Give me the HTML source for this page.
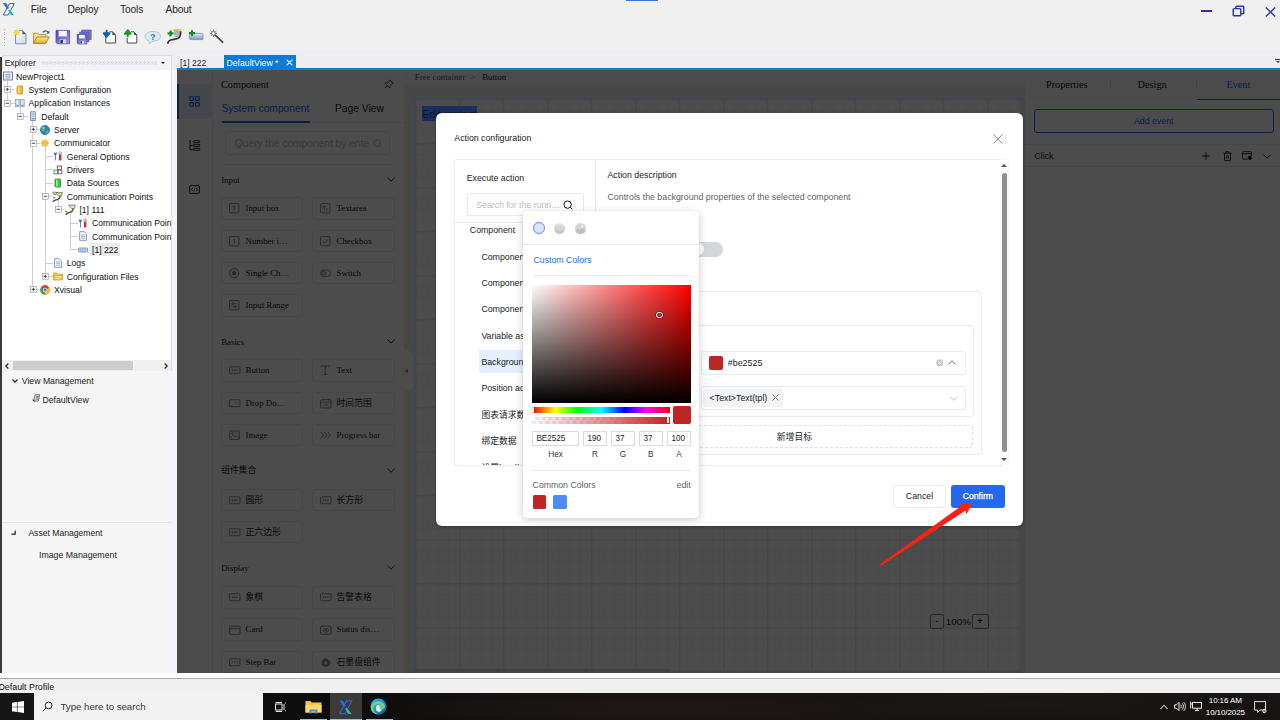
<!DOCTYPE html>
<html lang="en">
<head>
<meta charset="utf-8">
<title>Action configuration</title>
<style>
*{box-sizing:border-box;margin:0;padding:0}
html,body{width:1280px;height:720px;overflow:hidden;background:#f0f0f0}
body{font-family:"Liberation Sans","Noto Sans CJK SC",sans-serif;font-size:8.6px;color:#000;line-height:1}
#app{position:relative;width:1280px;height:720px;overflow:hidden;background:#f0f0f0}
.abs{position:absolute}
.t{position:absolute;white-space:nowrap;line-height:1;transform:translateY(.8px)}
#menubar .t,#taskbar .t{transform:none}
svg{position:absolute;overflow:visible}
/* ---------- top chrome ---------- */
#menubar .t{font-size:10.200px;color:#262626;top:5.100px;letter-spacing:-.12px}
#tabs{position:absolute;left:0;top:52px;width:1280px;height:17px;background:#eeeef2;z-index:5}
/* ---------- explorer ---------- */
#explorer{position:absolute;left:2px;top:69.5px;width:170px;height:290.800px;background:#fff;overflow:hidden}
.row{position:absolute;transform:translateY(.7px);left:0;height:13.33px;white-space:nowrap;font-size:8.65px;line-height:13.33px;color:#111}
/* ---------- web view ---------- */
#web{position:absolute;left:177px;top:69px;width:1103px;height:604px;background:#fff;overflow:hidden}
#mask{position:absolute;left:0;top:0;width:1103px;height:604px;background:rgba(0,0,0,.7)}
.serif{font-family:"Liberation Serif","Noto Serif CJK SC",serif}
</style>
</head>
<body>
<div id="app">

<!-- MENUBAR -->
<div id="menubar" class="abs" style="left:0;top:0;width:1280px;height:21px;background:#f0f0f0">
  <svg style="left:0;top:0" width="18" height="18" viewBox="0 0 18 18">
    <path d="M9.500 3.500H14.300L8.300 15H3.300Z" fill="none" stroke="#2c4cb4" stroke-width=".9"/>
    <path d="M2.800 3.100H6.200L8.900 8.100 7.300 9.300Z" fill="#2f62f5"/>
    <path d="M8.200 10.300 9.600 9.600 14.100 15.300H10.800Z" fill="#19c9a4"/>
  </svg>
  <span class="t" style="left:30.700px">File</span>
  <span class="t" style="left:67.5px">Deploy</span>
  <span class="t" style="left:120px">Tools</span>
  <span class="t" style="left:165.5px">About</span>
  <div class="abs" style="left:626px;top:0;width:32px;height:1px;background:#3a78d8"></div>
  <div class="abs" style="left:1201px;top:10.300px;width:11.200px;height:2.100px;background:#2a33a8"></div>
  <svg style="left:1232px;top:5px" width="13" height="12" viewBox="0 0 13 12" fill="none" stroke="#2a33a8" stroke-width="1.4">
    <rect x="1.2" y="3.6" width="7.6" height="7.2" rx="1"/><path d="M3.8 3.4V2.2a1 1 0 0 1 1-1h6a1 1 0 0 1 1 1v5.6a1 1 0 0 1-1 1H9.2"/>
  </svg>
  <svg style="left:1265px;top:6.5px" width="11" height="10" viewBox="0 0 11 10" stroke="#2a33a8" stroke-width="1.4"><path d="M.8.6 10.2 9.4M10.2.6.8 9.4"/></svg>
</div>

<!-- TOOLBAR -->
<div id="toolbar" class="abs" style="left:0;top:21px;width:1280px;height:30px;background:#f0f0f0">
  <div class="abs" style="left:4px;top:8px;width:1px;height:17px;background:repeating-linear-gradient(#b5b5b5 0 1px,transparent 1px 2.600px)"></div>
  <svg style="left:0;top:0" width="240" height="30" viewBox="0 21 240 30">
    <defs>
      <linearGradient id="gdoc" x1="0" y1="0" x2="1" y2="1"><stop offset="0" stop-color="#ffffff"/><stop offset="1" stop-color="#c6d6ee"/></linearGradient>
      <linearGradient id="gfold" x1="0" y1="0" x2="0" y2="1"><stop offset="0" stop-color="#fbe9a4"/><stop offset="1" stop-color="#e9a91f"/></linearGradient>
      <linearGradient id="gsave" x1="0" y1="0" x2="1" y2="1"><stop offset="0" stop-color="#4a48b8"/><stop offset="1" stop-color="#9d9ce0"/></linearGradient>
      <linearGradient id="gdev" x1="0" y1="0" x2="0" y2="1"><stop offset="0" stop-color="#e4eaf5"/><stop offset="1" stop-color="#7f95bd"/></linearGradient>
    </defs>
    <!-- new -->
    <path d="M15.600 30.600h6.800l3.600 3.600v9.600H15.600z" fill="url(#gdoc)" stroke="#6d7fa3" stroke-width=".9"/>
    <path d="M22.400 30.600v3.600H26z" fill="#4d5f86"/>
    <path d="M16.600 28.600l.9 2 2-.9-.9 2 2 .9-2 .9.900 2-2-.900-.900 2-.900-2-2 .900.900-2-2-.900 2-.900-.900-2 2 .900z" fill="#f7d84a"/>
    <!-- open -->
    <path d="M33.600 43.400V33.200h4.400l1.200 1.400h6.600v2.600" fill="#f6dc86" stroke="#a87f1c" stroke-width=".8"/>
    <path d="M33.600 43.400 36.800 37h12.400l-3.400 6.400z" fill="url(#gfold)" stroke="#9a6f10" stroke-width=".8"/>
    <path d="M42.600 32.400c1.600-2 4-2.200 5.400-.2" fill="none" stroke="#2f5fa8" stroke-width="1.200"/><path d="M49.400 30.400v3.200h-3z" fill="#2f5fa8"/>
    <!-- save -->
    <path d="M56 30.400h13.600v13.400H57.400L56 42.400z" fill="url(#gsave)" stroke="#3c3a9c" stroke-width=".7"/>
    <rect x="58.600" y="30.800" width="8.200" height="5.600" fill="#f4f5fd"/><rect x="59.600" y="39.400" width="6.400" height="4" fill="#d8d9f2"/><rect x="60.400" y="40" width="2.400" height="3.200" fill="#26262e"/>
    <!-- save all -->
    <path d="M81.600 30h9.600v9.600h-9.600z" fill="#7d7cd0" stroke="#4a48a8" stroke-width=".6"/>
    <path d="M79.400 32.200H89v9.600h-9.600z" fill="#706fc8" stroke="#4a48a8" stroke-width=".6"/>
    <path d="M77.200 34.400h9.600V44h-8.600l-1-1z" fill="url(#gsave)" stroke="#3c3a9c" stroke-width=".6"/>
    <rect x="79" y="34.800" width="5.800" height="3.600" fill="#f4f5fd"/><rect x="79.800" y="40.800" width="4.400" height="3" fill="#d8d9f2"/><rect x="80.400" y="41.200" width="1.600" height="2.400" fill="#26262e"/>
    <!-- import -->
    <path d="M105.800 35v8h9.800v-8.200l-3-3h-3" fill="#fff" stroke="#4a4a4a" stroke-width="1"/><path d="M112.400 31.800v3.200h3.200z" fill="#4a4a4a"/>
    <path d="M106.600 29.800v3.400M103.600 33.200h6l-3 3.600z" fill="#0f5fb0" stroke="#0f5fb0" stroke-width="1.800" stroke-linejoin="round" stroke-linecap="butt"/>
    <!-- export -->
    <path d="M127.200 38v5h9.600v-8.200l-3-3h-3" fill="#fff" stroke="#4a4a4a" stroke-width="1"/><path d="M133.800 31.800v3.200h3.200z" fill="#4a4a4a"/>
    <path d="M127.800 37.200v-3.600M124.800 33.800h6l-3-3.600z" fill="#149a22" stroke="#149a22" stroke-width="1.800" stroke-linejoin="round"/>
    <!-- help -->
    <path d="M152.800 31.400c-4.200 0-7.600 2.200-7.600 5 0 1.800 1.400 3.400 3.600 4.200l.6 3.400 2.600-2.800h.8c4.200 0 7.600-2.200 7.600-5s-3.400-4.800-7.600-4.800z" fill="#dcebf6" stroke="#9dbdd8" stroke-width=".9"/>
    <text x="152.900" y="39.800" font-family="Liberation Sans,sans-serif" font-size="8.500" font-weight="bold" fill="#4060c0" text-anchor="middle">?</text>
    <!-- plug plus -->
    <rect x="173" y="29" width="8.200" height="1.800" fill="#e6d63a"/><path d="M174.600 30.800h5.200v4.400l-1.200 1.600h-2.800l-1.200-1.600z" fill="#b4b4b4" stroke="#8a8a8a" stroke-width=".4"/>
    <path d="M180.600 31.400c.4 4.600-.8 6.600-3.600 7.400-3 .8-6.400.2-8.200 2.400-.8 1-1 1.800-1.200 2.600" fill="none" stroke="#333" stroke-width="1.700"/>
    <path d="M170.600 30.400v6M167.600 33.400h6" stroke="#1a8a24" stroke-width="2.100"/>
    <!-- device plus -->
    <rect x="189.600" y="33.400" width="13.400" height="6.200" rx="1.200" fill="url(#gdev)" stroke="#6a82ac" stroke-width=".7"/>
    <path d="M192 30.200v5.800M189 33.100h6" stroke="#1a8a24" stroke-width="2.100"/>
    <!-- wand -->
    <path d="M215.200 35.200 222.600 42.200" stroke="#444" stroke-width="1.800" stroke-linecap="round"/>
    <circle cx="213.400" cy="33.300" r="1.900" fill="#f4f4f4" stroke="#666" stroke-width=".9"/>
    <path d="M213.400 29.600v1.600M213.400 35.400v1.600M209.700 33.300h1.600M215.500 33.300h1.600M210.800 30.700l1.100 1.100M216 30.700l-1.100 1.100M210.800 35.900l1.100-1.100" stroke="#666" stroke-width=".9"/>
  </svg>
</div>

<!-- TAB STRIP -->
<div class="abs" style="left:0;top:50px;width:1280px;height:3px;background:#eeeef2"></div>
<div id="tabs">
  <div class="abs" style="left:2px;top:3px;width:170px;height:14.500px;border:1px solid #dcdce4;border-bottom:0;background:#f3f3f7"></div>
  <span class="t" style="left:4.700px;top:5.900px;font-size:8.350px;color:#222">Explorer</span>
  <div class="abs" style="left:41px;top:9px;width:116px;height:4px;background-image:radial-gradient(circle,#b9b9c4 .45px,transparent .6px),radial-gradient(circle,#b9b9c4 .45px,transparent .6px);background-size:2.660px 2.660px;background-position:0 0,1.330px 1.330px"></div>
  <div class="abs" style="left:160.500px;top:9.600px;width:0;height:0;border-left:2.800px solid transparent;border-right:2.800px solid transparent;border-top:2.800px solid #111"></div>
  <span class="t" style="left:180px;top:5.500px;font-size:8.600px;color:#222">[1] 222</span>
  <div class="abs" style="left:223.500px;top:3px;width:72px;height:14px;background:#0a7bd7"></div>
  <span class="t" style="left:226.500px;top:5.500px;font-size:8.700px;color:#fff">DefaultView *</span>
  <svg style="left:285.500px;top:7px" width="7" height="7" viewBox="0 0 7 7" stroke="#fff" stroke-width="1.100"><path d="M.6.6 6.400 6.400M6.400.6.6 6.400"/></svg>
  <div class="abs" style="left:176.600px;top:15.900px;width:1104px;height:1.800px;background:#0a7bd7"></div>
  <div class="abs" style="left:1275px;top:6.500px;width:5px;height:1px;background:#333"></div>
  <div class="abs" style="left:1275.500px;top:8.800px;width:0;height:0;border-left:2.500px solid transparent;border-right:2.500px solid transparent;border-top:2.600px solid #333"></div>
</div>

<!-- EXPLORER -->
<div id="explorer">
<!--EXP-START-->
<div class="abs" style="left:4.85px;top:11.84px;width:.7px;height:21.67px;background:#cfcfcf"></div>
<div class="abs" style="left:17.65px;top:37.50px;width:.7px;height:9.33px;background:#cfcfcf"></div>
<div class="abs" style="left:30.45px;top:50.84px;width:.7px;height:169.33px;background:#cfcfcf"></div>
<div class="abs" style="left:43.05px;top:77.50px;width:.7px;height:129.33px;background:#cfcfcf"></div>
<div class="abs" style="left:55.85px;top:130.83px;width:.7px;height:9.33px;background:#cfcfcf"></div>
<div class="abs" style="left:68.45px;top:144.17px;width:.7px;height:36.00px;background:#cfcfcf"></div>
<div class="abs" style="left:5.20px;top:19.82px;width:7.40px;height:.7px;background:#cfcfcf"></div>
<div class="abs" style="left:5.20px;top:33.15px;width:7.40px;height:.7px;background:#cfcfcf"></div>
<div class="abs" style="left:18.00px;top:46.49px;width:7.60px;height:.7px;background:#cfcfcf"></div>
<div class="abs" style="left:30.80px;top:59.82px;width:7.40px;height:.7px;background:#cfcfcf"></div>
<div class="abs" style="left:30.80px;top:73.15px;width:7.40px;height:.7px;background:#cfcfcf"></div>
<div class="abs" style="left:43.40px;top:86.48px;width:7.20px;height:.7px;background:#cfcfcf"></div>
<div class="abs" style="left:43.40px;top:99.82px;width:7.40px;height:.7px;background:#cfcfcf"></div>
<div class="abs" style="left:43.40px;top:113.15px;width:7.60px;height:.7px;background:#cfcfcf"></div>
<div class="abs" style="left:43.40px;top:126.48px;width:6.60px;height:.7px;background:#cfcfcf"></div>
<div class="abs" style="left:56.20px;top:139.82px;width:6.20px;height:.7px;background:#cfcfcf"></div>
<div class="abs" style="left:68.80px;top:153.15px;width:7.20px;height:.7px;background:#cfcfcf"></div>
<div class="abs" style="left:68.80px;top:166.48px;width:7.60px;height:.7px;background:#cfcfcf"></div>
<div class="abs" style="left:68.80px;top:179.82px;width:7.60px;height:.7px;background:#cfcfcf"></div>
<div class="abs" style="left:43.40px;top:193.15px;width:7.60px;height:.7px;background:#cfcfcf"></div>
<div class="abs" style="left:43.40px;top:206.48px;width:7.20px;height:.7px;background:#cfcfcf"></div>
<div class="abs" style="left:30.80px;top:219.81px;width:7.40px;height:.7px;background:#cfcfcf"></div>
<svg style="left:1.0px;top:1.8px" width="10" height="10" viewBox="0 0 10 10"><rect x=".5" y="1" width="9" height="8" fill="#eef3fb" stroke="#5b87c9" stroke-width="1"/><path d="M2.500 3.500h5M2.500 5.200h5M2.500 6.900h5" stroke="#777" stroke-width=".7"/></svg>
<span class="row" style="left:14.0px;top:0.17px">NewProject1</span>
<svg style="left:1.90px;top:16.87px" width="6.600" height="6.600" viewBox="0 0 6.600 6.600"><rect x=".35" y=".35" width="5.900" height="5.900" fill="#fff" stroke="#9a9a9a" stroke-width=".7"/><path d="M1.600 3.300h3.400" stroke="#222" stroke-width=".8"/><path d="M3.300 1.600v3.400" stroke="#222" stroke-width=".8"/></svg>
<svg style="left:12.6px;top:15.2px" width="10" height="10" viewBox="0 0 10 10"><rect x="2" y="1" width="5.600" height="8" rx="1" fill="#f2b92c" stroke="#c48a10" stroke-width=".8"/><rect x="3" y="1.600" width="1.600" height="6.800" fill="#fbe08a"/></svg>
<span class="row" style="left:26.6px;top:13.50px">System Configuration</span>
<svg style="left:1.90px;top:30.20px" width="6.600" height="6.600" viewBox="0 0 6.600 6.600"><rect x=".35" y=".35" width="5.900" height="5.900" fill="#fff" stroke="#9a9a9a" stroke-width=".7"/><path d="M1.600 3.300h3.400" stroke="#222" stroke-width=".8"/></svg>
<svg style="left:12.6px;top:28.5px" width="10" height="10" viewBox="0 0 10 10"><rect x=".6" y="1.400" width="3.600" height="7.400" fill="#dfe6f2" stroke="#8b9cc0" stroke-width=".8"/><rect x="5.600" y="1.400" width="3.600" height="7.400" fill="#dfe6f2" stroke="#8b9cc0" stroke-width=".8"/><rect x="1.400" y="6.800" width="2" height="1.200" fill="#4caf50"/><rect x="6.400" y="6.800" width="2" height="1.200" fill="#4caf50"/></svg>
<span class="row" style="left:26.6px;top:26.84px">Application Instances</span>
<svg style="left:14.70px;top:43.54px" width="6.600" height="6.600" viewBox="0 0 6.600 6.600"><rect x=".35" y=".35" width="5.900" height="5.900" fill="#fff" stroke="#9a9a9a" stroke-width=".7"/><path d="M1.600 3.300h3.400" stroke="#222" stroke-width=".8"/></svg>
<svg style="left:25.6px;top:41.8px" width="10" height="10" viewBox="0 0 10 10"><rect x="2.600" y=".8" width="4.600" height="8.600" fill="#e3ebf8" stroke="#5f7fb8" stroke-width=".9"/><path d="M3.600 3h2.600M3.600 5h2.600" stroke="#5f7fb8" stroke-width=".7"/><rect x="3.600" y="7" width="2.600" height="1.200" fill="#4caf50"/></svg>
<span class="row" style="left:39.3px;top:40.17px">Default</span>
<svg style="left:27.50px;top:56.87px" width="6.600" height="6.600" viewBox="0 0 6.600 6.600"><rect x=".35" y=".35" width="5.900" height="5.900" fill="#fff" stroke="#9a9a9a" stroke-width=".7"/><path d="M1.600 3.300h3.400" stroke="#222" stroke-width=".8"/><path d="M3.300 1.600v3.400" stroke="#222" stroke-width=".8"/></svg>
<svg style="left:38.2px;top:55.2px" width="10" height="10" viewBox="0 0 10 10"><circle cx="5" cy="5" r="4.600" fill="#2d7fd6" stroke="#1c4f9c" stroke-width=".6"/><path d="M2.200 2.600c1.400-.8 2.800-.4 3 .8s-1.600 1.400-1.400 2.600-1.400.6-2-.6.000-2.400.4-2.800zM6.400 5.600c1-.4 2.200.2 2 1.200s-1.400 2-2.200 1.400.000-2.200.2-2.600z" fill="#58c24a"/><ellipse cx="3.600" cy="2.800" rx="1.600" ry="1" fill="#fff" opacity=".35"/></svg>
<span class="row" style="left:52.0px;top:53.50px">Server</span>
<svg style="left:27.50px;top:70.20px" width="6.600" height="6.600" viewBox="0 0 6.600 6.600"><rect x=".35" y=".35" width="5.900" height="5.900" fill="#fff" stroke="#9a9a9a" stroke-width=".7"/><path d="M1.600 3.300h3.400" stroke="#222" stroke-width=".8"/></svg>
<svg style="left:38.2px;top:68.5px" width="10" height="10" viewBox="0 0 10 10"><path d="M5 0 6 3.200 9 1.400 7.200 4.200 10 5 7.200 6 9 8.800 6 7 5 10 4 7 1 8.800 2.800 6 0 5 2.800 4.200 1 1.400 4 3.200z" fill="#f59a1c"/><circle cx="5" cy="5" r="2.300" fill="#fbc43a"/></svg>
<span class="row" style="left:52.0px;top:66.84px">Communicator</span>
<svg style="left:50.6px;top:81.8px" width="10" height="10" viewBox="0 0 10 10"><path d="M2 9.400V4.600L1 3V1l1 1h.8l1-1v2L2.800 4.600v4.800z" fill="#2d6fd0"/><path d="M6 3.400h2.400v6H6z" fill="#d42a2a"/><path d="M5.600 3.400C5.600 1.600 6.400.6 7.200.6s1.600 1 1.600 2.800z" fill="#c8c8c8" stroke="#888" stroke-width=".4"/></svg>
<span class="row" style="left:64.7px;top:80.17px">General Options</span>
<svg style="left:50.8px;top:95.2px" width="10" height="10" viewBox="0 0 10 10"><rect x="4.400" y="1" width="4" height="3.600" fill="#fff" stroke="#c8403a" stroke-width="1"/><rect x="1" y="5.200" width="3.600" height="3.600" fill="#fff" stroke="#3aa044" stroke-width="1"/><rect x="5.200" y="5.200" width="3.600" height="3.600" fill="#fff" stroke="#6a6ab0" stroke-width="1"/></svg>
<span class="row" style="left:64.7px;top:93.50px">Drivers</span>
<svg style="left:51.0px;top:108.5px" width="10" height="10" viewBox="0 0 10 10"><rect x="2" y="1" width="5.600" height="8" rx="1" fill="#3fbf3f" stroke="#1f8a1f" stroke-width=".8"/><rect x="3" y="1.600" width="1.600" height="6.800" fill="#a8eaa0"/></svg>
<span class="row" style="left:64.7px;top:106.83px">Data Sources</span>
<svg style="left:40.10px;top:123.53px" width="6.600" height="6.600" viewBox="0 0 6.600 6.600"><rect x=".35" y=".35" width="5.900" height="5.900" fill="#fff" stroke="#9a9a9a" stroke-width=".7"/><path d="M1.600 3.300h3.400" stroke="#222" stroke-width=".8"/></svg>
<svg style="left:50.0px;top:121.3px" width="12" height="11" viewBox="0 0 12 11"><path d="M3.600 1.600h6.800L9.400 5H6.600z" fill="#e2d9a0" stroke="#6a6a5c" stroke-width=".8"/><path d="M8 5c0 3-1.400 3.400-3.600 3.800S1.400 9.600.8 10.800" fill="none" stroke="#555" stroke-width="1.500"/><path d="M.6 1.200h4l-.6 2.400H2z" fill="#e2d9a0" stroke="#6a6a5c" stroke-width=".7"/><rect x="1" y="6" width="2.400" height="1.400" fill="#3fbf3f"/></svg>
<span class="row" style="left:64.7px;top:120.17px">Communication Points</span>
<svg style="left:52.90px;top:136.87px" width="6.600" height="6.600" viewBox="0 0 6.600 6.600"><rect x=".35" y=".35" width="5.900" height="5.900" fill="#fff" stroke="#9a9a9a" stroke-width=".7"/><path d="M1.600 3.300h3.400" stroke="#222" stroke-width=".8"/></svg>
<svg style="left:62.4px;top:134.7px" width="12" height="11" viewBox="0 0 12 11"><path d="M4.600 1.200h6.800L10.400 4.600H7.600z" fill="#e8e8e0" stroke="#6a6a5c" stroke-width=".8"/><path d="M9 4.600c0 3-1.400 3.600-3.600 4S2.400 9.600 1.800 10.800" fill="none" stroke="#555" stroke-width="1.500"/><rect x="1" y="7" width="2.400" height="1.400" fill="#3fbf3f"/></svg>
<span class="row" style="left:77.4px;top:133.50px">[1] 111</span>
<svg style="left:76.0px;top:148.5px" width="10" height="10" viewBox="0 0 10 10"><path d="M2 9.400V4.600L1 3V1l1 1h.8l1-1v2L2.800 4.600v4.800z" fill="#2d6fd0"/><path d="M6 3.400h2.400v6H6z" fill="#d42a2a"/><path d="M5.600 3.400C5.600 1.600 6.400.6 7.200.6s1.600 1 1.600 2.800z" fill="#c8c8c8" stroke="#888" stroke-width=".4"/></svg>
<span class="row" style="left:90.0px;top:146.83px">Communication Points</span>
<svg style="left:76.4px;top:161.8px" width="10" height="10" viewBox="0 0 10 10"><path d="M1.600.6h4.600l2.400 2.400v6.400H1.600z" fill="#f4f7fc" stroke="#6f86b4" stroke-width=".8"/><path d="M3 4h4.200M3 5.600h4.200M3 7.200h4.200" stroke="#7f9fd0" stroke-width=".7"/></svg>
<span class="row" style="left:90.0px;top:160.17px">Communication Points</span>
<div class="abs" style="left:88px;top:173.77px;width:30px;height:12.800px;background:#ececec"></div>
<svg style="left:76.4px;top:175.2px" width="10" height="10" viewBox="0 0 10 10"><rect x=".6" y="3" width="9" height="4" rx=".8" fill="#c9daf0" stroke="#5f7fb8" stroke-width=".8"/><rect x="2" y="4.400" width="6" height="1.200" fill="#8fb0dc"/></svg>
<span class="row" style="left:90.0px;top:173.50px">[1] 222</span>
<svg style="left:51.0px;top:188.5px" width="10" height="10" viewBox="0 0 10 10"><path d="M1.600.6h4.600l2.400 2.400v6.400H1.600z" fill="#f4f7fc" stroke="#6f86b4" stroke-width=".8"/><path d="M3 4h4.200M3 5.600h4.200M3 7.200h4.200" stroke="#7f9fd0" stroke-width=".7"/></svg>
<span class="row" style="left:64.7px;top:186.83px">Logs</span>
<svg style="left:40.10px;top:203.53px" width="6.600" height="6.600" viewBox="0 0 6.600 6.600"><rect x=".35" y=".35" width="5.900" height="5.900" fill="#fff" stroke="#9a9a9a" stroke-width=".7"/><path d="M1.600 3.300h3.400" stroke="#222" stroke-width=".8"/><path d="M3.300 1.600v3.400" stroke="#222" stroke-width=".8"/></svg>
<svg style="left:50.6px;top:201.8px" width="10" height="10" viewBox="0 0 10 10"><path d="M.6 8.800V2h3.200l1 1.200h4.600v5.600z" fill="#f3c94a" stroke="#c49a20" stroke-width=".7"/><path d="M.6 8.800 2 4.400h7.800L8.600 8.800z" fill="#f8dc78" stroke="#c49a20" stroke-width=".6"/></svg>
<span class="row" style="left:64.7px;top:200.17px">Configuration Files</span>
<svg style="left:27.50px;top:216.86px" width="6.600" height="6.600" viewBox="0 0 6.600 6.600"><rect x=".35" y=".35" width="5.900" height="5.900" fill="#fff" stroke="#9a9a9a" stroke-width=".7"/><path d="M1.600 3.300h3.400" stroke="#222" stroke-width=".8"/><path d="M3.300 1.600v3.400" stroke="#222" stroke-width=".8"/></svg>
<svg style="left:38.2px;top:215.2px" width="10" height="10" viewBox="0 0 10 10"><circle cx="5" cy="5" r="4.700" fill="#e33b2e"/><path d="M5 5 .9 2.700A4.700 4.700 0 0 0 4.600 9.700z" fill="#2da94f"/><path d="M5 5 4.600 9.700A4.700 4.700 0 0 0 9.100 2.700z" fill="#f9bc15"/><path d="M5 5 .9 2.700A4.700 4.700 0 0 1 9.100 2.700z" fill="#e33b2e"/><circle cx="5" cy="5" r="2.200" fill="#fff"/><circle cx="5" cy="5" r="1.700" fill="#3f86f0"/></svg>
<span class="row" style="left:52.0px;top:213.50px">Xvisual</span>
<!--EXP-END-->
</div>
<!-- left window edge -->
<div class="abs" style="left:0;top:57px;width:1.700px;height:616px;background:#3a3a3a;z-index:6"></div>
<!-- explorer h-scrollbar -->
<div class="abs" style="left:2px;top:360.300px;width:169.500px;height:11px;background:#f0f0f0">
  <div class="abs" style="left:11.300px;top:.5px;width:119.800px;height:9.700px;background:#cdcdcd"></div>
  <svg style="left:3.200px;top:3px" width="4" height="6" viewBox="0 0 4 6" fill="none" stroke="#333" stroke-width="1.300"><path d="M3.400.5.8 3l2.600 2.500"/></svg>
  <svg style="left:162px;top:3px" width="4" height="6" viewBox="0 0 4 6" fill="none" stroke="#333" stroke-width="1.300"><path d="M.6.5 3.200 3 .6 5.500"/></svg>
</div>
<!-- splitter between explorer and web -->
<div class="abs" style="left:171.500px;top:69.500px;width:5.200px;height:603.500px;background:#f4f4f9"></div>
<div class="abs" style="left:171.300px;top:55px;width:.8px;height:618px;background:#dedee6"></div>
<!-- view management -->
<div class="abs" style="left:2px;top:371.300px;width:169.500px;height:150.500px;background:#f5f5f5">
  <svg style="left:9.500px;top:7.600px" width="6" height="4" viewBox="0 0 6 4" fill="none" stroke="#222" stroke-width="1.200"><path d="M.5.5 3 3.200 5.500.5"/></svg>
  <span class="t" style="left:19.800px;top:4.600px;font-size:8.700px;color:#222">View Management</span>
  <svg style="left:29.500px;top:22.500px" width="9" height="9" viewBox="0 0 9 9" fill="none" stroke="#333" stroke-width=".7"><path d="M3.200.8h4.600L6.200 7H1.600z"/><path d="M4.200 2.400h2.400M3.800 3.800h2.400M3.400 5.200h2.400"/><path d="M.6 5.600 2.600 7.400" stroke-width="1.100"/></svg>
  <span class="t" style="left:40.500px;top:24.200px;font-size:8.700px;color:#222">DefaultView</span>
</div>
<!-- asset management -->
<div class="abs" style="left:2px;top:521.800px;width:169.500px;height:151.200px;background:#f5f5f5;border-top:.8px solid #e4e4e4">
  <svg style="left:8.500px;top:7px" width="5" height="5" viewBox="0 0 5 5"><path d="M4.200.4v3.800H.4" fill="none" stroke="#222" stroke-width="1.200"/></svg>
  <span class="t" style="left:26.400px;top:5.200px;font-size:8.600px;color:#222">Asset Management</span>
  <span class="t" style="left:37px;top:27.100px;font-size:8.750px;color:#222">Image Management</span>
</div>

<!-- WEB VIEW -->
<div id="web">
  <!--UNDER-START-->
<div id="under" class="abs" style="left:-177px;top:-69px;width:1280px;height:720px">
<div class="abs" style="left:177px;top:69.500px;width:35.500px;height:603.500px;background:#fff;border-right:.8px solid #e8e9eb"></div>
<div class="abs" style="left:177px;top:84px;width:35.500px;height:35px;background:#e6efff"></div>
<div class="abs" style="left:177px;top:84px;width:2px;height:35px;background:#2468f2"></div>
<svg style="left:189px;top:96px" width="11" height="11" viewBox="0 0 11 11" fill="none" stroke="#2468f2" stroke-width="1.100"><rect x=".8" y=".8" width="3.600" height="3.600" rx=".5"/><rect x="6.600" y=".8" width="3.600" height="3.600" rx=".5"/><rect x=".8" y="6.600" width="3.600" height="3.600" rx=".5"/><rect x="6.600" y="6.600" width="3.600" height="3.600" rx=".5"/></svg>
<svg style="left:188.500px;top:140px" width="11.500" height="11" viewBox="0 0 11.500 11" fill="none" stroke="#151b26" stroke-width=".85"><path d="M1 1.200v8.600h2.600M1 5.500h2.600"/><circle cx="1" cy="1" r=".8" fill="#151b26" stroke="none"/><rect x="4.400" y=".6" width="6.400" height="2" rx=".7"/><rect x="4.400" y="4.400" width="6.400" height="2" rx=".7"/><rect x="4.400" y="8.400" width="6.400" height="2" rx=".7"/></svg>
<svg style="left:189px;top:184.500px" width="11" height="9" viewBox="0 0 11 9" fill="none" stroke="#151b26" stroke-width="1"><rect x=".6" y=".6" width="9.800" height="7.800" rx=".8"/><path d="M3.800 3 2.400 4.500l1.400 1.500M7.200 3l1.400 1.500L7.200 6M6 2.600 5 6.400" stroke-width=".8"/></svg>
<div class="abs" style="left:213px;top:69.500px;width:190.500px;height:603.500px;background:#fff"></div>
<span class="t serif" style="left:221px;top:79px;font-size:10.250px;color:#151b26">Component</span>
<svg style="left:383.500px;top:79px" width="10" height="10" viewBox="0 0 10 10" fill="none" stroke="#151b26" stroke-width=".8"><path d="M5.600.8 9.200 4.400 8.400 5.200 7.800 4.800 6 6.600c.4 1 .2 1.800-.4 2.400L1 4.400c.6-.6 1.400-.8 2.400-.4L5.200 2.200 4.800 1.600zM3.300 6.700.8 9.200"/></svg>
<span class="t" style="left:221.500px;top:102.800px;font-size:10.250px;color:#2468f2">System component</span>
<span class="t" style="left:335px;top:102.800px;font-size:10.250px;color:#151b26">Page View</span>
<div class="abs" style="left:213px;top:122.300px;width:190.500px;height:.8px;background:#e8e9eb"></div>
<div class="abs" style="left:221.500px;top:121px;width:88px;height:1.600px;background:#2468f2"></div>
<div class="abs" style="left:225.300px;top:131.400px;width:165.200px;height:23.200px;border:.8px solid #e8e9eb;border-radius:3px"></div>
<span class="t" style="left:234.800px;top:137.800px;font-size:10.200px;color:#b8babf">Query the component by ente</span>
<svg style="left:372.500px;top:138.500px" width="9" height="9" viewBox="0 0 9 9" fill="none" stroke="#b8babf" stroke-width=".9"><circle cx="4" cy="4" r="3.300"/><path d="M6.400 6.400 8.400 8.400"/></svg>
<div class="abs" style="left:221.300px;top:164px;width:173.500px;height:.8px;background:#e8e9eb"></div>
<span class="t serif" style="left:221.200px;top:174.65px;font-size:8.800px;color:#151b26">Input</span>
<svg style="left:387.200px;top:177.15px" width="8" height="5" viewBox="0 0 8 5" fill="none" stroke="#151b26" stroke-width=".9"><path d="M.5.6 4 4.200 7.500.6"/></svg>
<div class="abs" style="left:221.25px;top:197.35px;width:81.75px;height:22.500px;border:.8px solid #e8e9eb;border-radius:3px"></div>
<svg style="left:228.75px;top:203.40px" width="11.600" height="11.600" viewBox="0 0 10 10" fill="none" stroke="#84878c" stroke-width=".8"><rect x=".5" y=".5" width="8" height="8" rx=".6"/><path d="M2.600 2.800h3.800M4.500 2.800v3.800" stroke-width=".7"/></svg>
<span class="t serif" style="left:245.55px;top:203.30px;font-size:8.800px;color:#151b26">Input box</span>
<div class="abs" style="left:312.25px;top:197.35px;width:82.5px;height:22.500px;border:.8px solid #e8e9eb;border-radius:3px"></div>
<svg style="left:319.75px;top:203.40px" width="11.600" height="11.600" viewBox="0 0 10 10" fill="none" stroke="#84878c" stroke-width=".8"><rect x=".5" y=".5" width="8" height="8" rx=".6"/><path d="M2.200 2.800h3M3.700 2.800v3.800M5.800 5v1.600M5.300 5h1.200" stroke-width=".7"/></svg>
<span class="t serif" style="left:336.55px;top:203.30px;font-size:8.800px;color:#151b26">Textarea</span>
<div class="abs" style="left:221.25px;top:229.65px;width:81.75px;height:22.500px;border:.8px solid #e8e9eb;border-radius:3px"></div>
<svg style="left:228.75px;top:235.70px" width="11.600" height="11.600" viewBox="0 0 10 10" fill="none" stroke="#84878c" stroke-width=".8"><rect x=".5" y=".5" width="8" height="8" rx=".6"/><path d="M3.800 3.400 4.700 2.800v3.800" stroke-width=".7"/></svg>
<span class="t serif" style="left:245.55px;top:235.60px;font-size:8.800px;color:#151b26">Number i…</span>
<div class="abs" style="left:312.25px;top:229.65px;width:82.5px;height:22.500px;border:.8px solid #e8e9eb;border-radius:3px"></div>
<svg style="left:319.75px;top:235.70px" width="11.600" height="11.600" viewBox="0 0 10 10" fill="none" stroke="#84878c" stroke-width=".8"><rect x=".5" y=".5" width="8" height="8" rx=".6"/><path d="M2.400 4.500 4 6l2.800-3" stroke-width=".8"/></svg>
<span class="t serif" style="left:336.55px;top:235.60px;font-size:8.800px;color:#151b26">Checkbox</span>
<div class="abs" style="left:221.25px;top:261.95px;width:81.75px;height:22.500px;border:.8px solid #e8e9eb;border-radius:3px"></div>
<svg style="left:228.75px;top:268.00px" width="11.600" height="11.600" viewBox="0 0 10 10" fill="none" stroke="#84878c" stroke-width=".8"><circle cx="4.500" cy="4.500" r="4"/><circle cx="4.500" cy="4.500" r="2" fill="#84878c" stroke="none"/></svg>
<span class="t serif" style="left:245.55px;top:267.90px;font-size:8.800px;color:#151b26">Single Ch…</span>
<div class="abs" style="left:312.25px;top:261.95px;width:82.5px;height:22.500px;border:.8px solid #e8e9eb;border-radius:3px"></div>
<svg style="left:319.75px;top:268.00px" width="11.600" height="11.600" viewBox="0 0 10 10" fill="none" stroke="#84878c" stroke-width=".8"><rect x=".5" y="1.800" width="8.600" height="5.400" rx="2.700"/><circle cx="3.200" cy="4.500" r="1.500"/></svg>
<span class="t serif" style="left:336.55px;top:267.90px;font-size:8.800px;color:#151b26">Switch</span>
<div class="abs" style="left:221.25px;top:294.25px;width:81.75px;height:22.500px;border:.8px solid #e8e9eb;border-radius:3px"></div>
<svg style="left:228.75px;top:300.30px" width="11.600" height="11.600" viewBox="0 0 10 10" fill="none" stroke="#84878c" stroke-width=".8"><rect x=".5" y=".5" width="8" height="8" rx=".6"/><path d="M2 3.200h5M2 5.800h5" stroke-width=".7"/><circle cx="3.400" cy="3.200" r=".9" fill="#fff"/><circle cx="5.600" cy="5.800" r=".9" fill="#fff"/></svg>
<span class="t serif" style="left:245.55px;top:300.20px;font-size:8.800px;color:#151b26">Input Range</span>
<span class="t serif" style="left:221.200px;top:336.65px;font-size:8.800px;color:#151b26">Basics</span>
<svg style="left:387.200px;top:339.15px" width="8" height="5" viewBox="0 0 8 5" fill="none" stroke="#151b26" stroke-width=".9"><path d="M.5.6 4 4.200 7.500.6"/></svg>
<div class="abs" style="left:221.25px;top:359.25px;width:81.75px;height:22.500px;border:.8px solid #e8e9eb;border-radius:3px"></div>
<svg style="left:228.75px;top:365.30px" width="11.600" height="11.600" viewBox="0 0 10 10" fill="none" stroke="#84878c" stroke-width=".8"><rect x=".5" y="1.500" width="9" height="6" rx=".6"/><path d="M2.500 4.500h5" stroke-width="1.300" stroke-dasharray="1.200 .6"/></svg>
<span class="t serif" style="left:245.55px;top:365.20px;font-size:8.800px;color:#151b26">Button</span>
<div class="abs" style="left:312.25px;top:359.25px;width:82.5px;height:22.500px;border:.8px solid #e8e9eb;border-radius:3px"></div>
<svg style="left:319.75px;top:365.30px" width="11.600" height="11.600" viewBox="0 0 10 10" fill="none" stroke="#84878c" stroke-width=".8"><path d="M1 2V.8h7V2M4.500.8v7.400M3.200 8.200h2.600" stroke-width=".8"/></svg>
<span class="t serif" style="left:336.55px;top:365.20px;font-size:8.800px;color:#151b26">Text</span>
<div class="abs" style="left:221.25px;top:391.55px;width:81.75px;height:22.500px;border:.8px solid #e8e9eb;border-radius:3px"></div>
<svg style="left:228.75px;top:397.60px" width="11.600" height="11.600" viewBox="0 0 10 10" fill="none" stroke="#84878c" stroke-width=".8"><rect x=".5" y="1.500" width="9" height="6" rx=".6"/><path d="M5.600 3.800 6.800 5 8 3.800" stroke-width=".7"/></svg>
<span class="t serif" style="left:245.55px;top:397.50px;font-size:8.800px;color:#151b26">Drop Do…</span>
<div class="abs" style="left:312.25px;top:391.55px;width:82.5px;height:22.500px;border:.8px solid #e8e9eb;border-radius:3px"></div>
<svg style="left:319.75px;top:397.60px" width="11.600" height="11.600" viewBox="0 0 10 10" fill="none" stroke="#84878c" stroke-width=".8"><rect x=".5" y="1.400" width="9" height="7.200" rx=".6"/><path d="M.5 3.600h9M2.800.4v2M7.200.4v2M2.400 6h5.200" stroke-width=".7"/></svg>
<span class="t" style="left:336.55px;top:397.80px;font-size:8.800px;color:#151b26;font-family:'Noto Sans CJK SC',sans-serif">时间范围</span>
<div class="abs" style="left:221.25px;top:423.85px;width:81.75px;height:22.500px;border:.8px solid #e8e9eb;border-radius:3px"></div>
<svg style="left:228.75px;top:429.90px" width="11.600" height="11.600" viewBox="0 0 10 10" fill="none" stroke="#84878c" stroke-width=".8"><rect x=".5" y=".8" width="8.400" height="7.400" rx=".6"/><path d="M1 7 3.600 4.400 5.400 6.200 6.600 5 8.600 7" stroke-width=".7"/><circle cx="3" cy="3" r=".7"/></svg>
<span class="t serif" style="left:245.55px;top:429.80px;font-size:8.800px;color:#151b26">Image</span>
<div class="abs" style="left:312.25px;top:423.85px;width:82.5px;height:22.500px;border:.8px solid #e8e9eb;border-radius:3px"></div>
<svg style="left:319.75px;top:429.90px" width="11.600" height="11.600" viewBox="0 0 10 10" fill="none" stroke="#84878c" stroke-width=".8"><path d="M.8 1.800 2.800 4.500.8 7.200M3.800 1.800l2 2.700-2 2.700M6.800 1.800l2 2.700-2 2.700" stroke-width=".8"/></svg>
<span class="t serif" style="left:336.55px;top:429.80px;font-size:8.800px;color:#151b26">Progress bar</span>
<span class="t" style="left:221.200px;top:465.200px;font-size:8.800px;color:#151b26;font-family:'Noto Sans CJK SC',sans-serif">组件集合</span>
<svg style="left:387.200px;top:467.600px" width="8" height="5" viewBox="0 0 8 5" fill="none" stroke="#151b26" stroke-width=".9"><path d="M.5.6 4 4.200 7.500.6"/></svg>
<div class="abs" style="left:221.25px;top:488.75px;width:81.75px;height:22.500px;border:.8px solid #e8e9eb;border-radius:3px"></div>
<svg style="left:228.75px;top:494.80px" width="11.600" height="11.600" viewBox="0 0 10 10" fill="none" stroke="#84878c" stroke-width=".8"><rect x=".5" y="1.500" width="9" height="6" rx=".6"/><path d="M2.500 4.500h5" stroke-width="1.300" stroke-dasharray="1.200 .6"/></svg>
<span class="t" style="left:245.55px;top:495.00px;font-size:8.800px;color:#151b26;font-family:'Noto Sans CJK SC',sans-serif">圆形</span>
<div class="abs" style="left:312.25px;top:488.75px;width:82.5px;height:22.500px;border:.8px solid #e8e9eb;border-radius:3px"></div>
<svg style="left:319.75px;top:494.80px" width="11.600" height="11.600" viewBox="0 0 10 10" fill="none" stroke="#84878c" stroke-width=".8"><rect x=".5" y="1.500" width="9" height="6" rx=".6"/><path d="M2.500 4.500h5" stroke-width="1.300" stroke-dasharray="1.200 .6"/></svg>
<span class="t" style="left:336.55px;top:495.00px;font-size:8.800px;color:#151b26;font-family:'Noto Sans CJK SC',sans-serif">长方形</span>
<div class="abs" style="left:221.25px;top:520.95px;width:81.75px;height:22.500px;border:.8px solid #e8e9eb;border-radius:3px"></div>
<svg style="left:228.75px;top:527.00px" width="11.600" height="11.600" viewBox="0 0 10 10" fill="none" stroke="#84878c" stroke-width=".8"><rect x=".5" y="1.500" width="9" height="6" rx=".6"/><path d="M2.500 4.500h5" stroke-width="1.300" stroke-dasharray="1.200 .6"/></svg>
<span class="t" style="left:245.55px;top:527.20px;font-size:8.800px;color:#151b26;font-family:'Noto Sans CJK SC',sans-serif">正六边形</span>
<span class="t serif" style="left:221.200px;top:562.90px;font-size:8.800px;color:#151b26">Display</span>
<svg style="left:387.200px;top:565.40px" width="8" height="5" viewBox="0 0 8 5" fill="none" stroke="#151b26" stroke-width=".9"><path d="M.5.6 4 4.200 7.500.6"/></svg>
<div class="abs" style="left:221.25px;top:586.05px;width:81.75px;height:22.500px;border:.8px solid #e8e9eb;border-radius:3px"></div>
<svg style="left:228.75px;top:592.10px" width="11.600" height="11.600" viewBox="0 0 10 10" fill="none" stroke="#84878c" stroke-width=".8"><rect x=".5" y="1.500" width="9" height="6" rx=".6"/><path d="M2.500 4.500h5" stroke-width="1.300" stroke-dasharray="1.200 .6"/></svg>
<span class="t" style="left:245.55px;top:592.30px;font-size:8.800px;color:#151b26;font-family:'Noto Sans CJK SC',sans-serif">象棋</span>
<div class="abs" style="left:312.25px;top:586.05px;width:82.5px;height:22.500px;border:.8px solid #e8e9eb;border-radius:3px"></div>
<svg style="left:319.75px;top:592.10px" width="11.600" height="11.600" viewBox="0 0 10 10" fill="none" stroke="#84878c" stroke-width=".8"><rect x=".5" y="1.500" width="9" height="6" rx=".6"/><path d="M2.500 4.500h5" stroke-width="1.300" stroke-dasharray="1.200 .6"/></svg>
<span class="t" style="left:336.55px;top:592.30px;font-size:8.800px;color:#151b26;font-family:'Noto Sans CJK SC',sans-serif">告警表格</span>
<div class="abs" style="left:221.25px;top:618.45px;width:81.75px;height:22.500px;border:.8px solid #e8e9eb;border-radius:3px"></div>
<svg style="left:228.75px;top:624.50px" width="11.600" height="11.600" viewBox="0 0 10 10" fill="none" stroke="#84878c" stroke-width=".8"><rect x=".5" y="1" width="9" height="7" rx=".6"/><path d="M.5 3.200h9" stroke-width=".7"/></svg>
<span class="t serif" style="left:245.55px;top:624.40px;font-size:8.800px;color:#151b26">Card</span>
<div class="abs" style="left:312.25px;top:618.45px;width:82.5px;height:22.500px;border:.8px solid #e8e9eb;border-radius:3px"></div>
<svg style="left:319.75px;top:624.50px" width="11.600" height="11.600" viewBox="0 0 10 10" fill="none" stroke="#84878c" stroke-width=".8"><rect x=".5" y="1" width="9" height="7" rx=".6"/><ellipse cx="5" cy="4.500" rx="2.600" ry="1.600" stroke-width=".7"/><circle cx="5" cy="4.500" r=".7" fill="#84878c"/></svg>
<span class="t serif" style="left:336.55px;top:624.40px;font-size:8.800px;color:#151b26">Status dis…</span>
<div class="abs" style="left:221.25px;top:650.85px;width:81.75px;height:22.500px;border:.8px solid #e8e9eb;border-radius:3px"></div>
<svg style="left:228.75px;top:656.90px" width="11.600" height="11.600" viewBox="0 0 10 10" fill="none" stroke="#84878c" stroke-width=".8"><rect x=".5" y="1.500" width="9" height="6" rx=".6"/><path d="M2.200 3.400 3.200 4.500 2.200 5.600M4.400 3.400l1 1.100-1 1.100M6.600 3.400l1 1.100-1 1.100" stroke-width=".6"/></svg>
<span class="t serif" style="left:245.55px;top:656.80px;font-size:8.800px;color:#151b26">Step Bar</span>
<div class="abs" style="left:312.25px;top:650.85px;width:82.5px;height:22.500px;border:.8px solid #e8e9eb;border-radius:3px"></div>
<svg style="left:319.75px;top:656.90px" width="11.600" height="11.600" viewBox="0 0 10 10" fill="none" stroke="#84878c" stroke-width=".8"><circle cx="5" cy="5" r="2.600" stroke-width="2.400" stroke-dasharray="1.400 .65"/><circle cx="5" cy="5" r="2.300" stroke-width="1.500"/></svg>
<span class="t" style="left:336.55px;top:657.10px;font-size:8.800px;color:#151b26;font-family:'Noto Sans CJK SC',sans-serif">石墨盘组件</span>
<div class="abs" style="left:403.500px;top:69.500px;width:621.500px;height:603.500px;background:#eeeeef"></div>
<div class="abs" style="left:403.500px;top:69.500px;width:621.500px;height:15.300px;background:#fafafa;border-bottom:.8px solid #e8e9eb"></div>
<span class="t serif" style="left:414.800px;top:71.700px;font-size:8.750px;color:#5c5f66">Free container</span>
<span class="t serif" style="left:470.800px;top:71.700px;font-size:8.750px;color:#5c5f66">&gt;</span>
<span class="t serif" style="left:482.200px;top:71.700px;font-size:8.750px;color:#151b26">Button</span>
<div class="abs" style="left:415px;top:99px;width:603.500px;height:571px;background-color:#fff;background-image:linear-gradient(#e6e6e6 .9px,transparent .9px),linear-gradient(90deg,#e6e6e6 .9px,transparent .9px),linear-gradient(#f3f3f3 .8px,transparent .8px),linear-gradient(90deg,#f3f3f3 .8px,transparent .8px);background-size:44px 44px,44px 44px,11px 11px,11px 11px;background-position:0 0.300px,0.300px 0,0 0.300px,0.300px 0"></div>
<div class="abs" style="left:403px;top:351.200px;width:9.500px;height:39.400px;background:#fff;border-radius:0 6px 6px 0"></div>
<div class="abs" style="left:404.200px;top:368.800px;width:0;height:0;border-top:2.500px solid transparent;border-bottom:2.500px solid transparent;border-right:4px solid #84878c"></div>
<div class="abs" style="left:412px;top:669.300px;width:258px;height:3.200px;background:#d9d9d9;border-radius:2px"></div>
<div class="abs" style="left:1019.500px;top:95px;width:4px;height:578px;background:#ececec"></div>
<div class="abs" style="left:930px;top:613.500px;width:14px;height:15px;border:.8px solid #84878c;border-radius:2px"></div>
<span class="t" style="left:935.300px;top:616px;font-size:9px;color:#151b26">-</span>
<span class="t" style="left:945.800px;top:615.600px;font-size:9.800px;color:#151b26">100%</span>
<div class="abs" style="left:971.500px;top:613.500px;width:17px;height:15px;border:.8px solid #84878c;border-radius:2px"></div>
<span class="t" style="left:977.200px;top:615.500px;font-size:9px;color:#151b26;font-weight:bold">+</span>
<div class="abs" style="left:1024.500px;top:69.500px;width:255.500px;height:603.500px;background:#fff;border-left:.8px solid #e8e9eb"></div>
<div class="abs" style="left:1025px;top:69.500px;width:255px;height:30.500px;background:#fafafb"></div>
<span class="t serif" style="left:1046px;top:79.200px;font-size:10.250px;color:#151b26">Properties</span>
<span class="t serif" style="left:1137.600px;top:79.200px;font-size:10.250px;color:#151b26">Design</span>
<span class="t serif" style="left:1226.400px;top:79.200px;font-size:10.250px;color:#2468f2">Event</span>
<div class="abs" style="left:1110.300px;top:79.600px;width:.8px;height:8.400px;background:#dfe0e3"></div>
<div class="abs" style="left:1196px;top:79.600px;width:.8px;height:8.400px;background:#dfe0e3"></div>
<div class="abs" style="left:1197px;top:98.700px;width:83px;height:1.600px;background:#2468f2"></div>
<div class="abs" style="left:1034px;top:109.400px;width:239.500px;height:23.300px;border:1px solid #2468f2;border-radius:3px"></div>
<span class="t" style="left:1133.900px;top:116.200px;font-size:8.800px;color:#2468f2">Add event</span>
<div class="abs" style="left:1025.500px;top:143.700px;width:254.500px;height:23px;background:#fff;border-top:.8px solid #e8e9eb;border-bottom:.8px solid #e8e9eb"></div>
<span class="t" style="left:1034.500px;top:151.200px;font-size:8.700px;color:#151b26">Click</span>
<svg style="left:1201.500px;top:151.500px" width="8" height="8" viewBox="0 0 8 8" stroke="#151b26" stroke-width=".9"><path d="M4 .2v7.600M.2 4h7.600"/></svg>
<svg style="left:1222.500px;top:150.500px" width="9" height="10" viewBox="0 0 9 10" fill="none" stroke="#151b26" stroke-width=".9"><path d="M.4 2.200h8.200M3 2V.7h3V2M1.500 2.400v6.600a.6.600 0 0 0 .6.600h4.800a.6.600 0 0 0 .6-.6V2.400M3.600 4.400v3.200M5.400 4.400v3.200"/></svg>
<svg style="left:1241.500px;top:151px" width="10" height="9" viewBox="0 0 10 9" fill="none" stroke="#151b26" stroke-width=".9"><path d="M5.600 8.200H1.200a.7.700 0 0 1-.7-.7V1.400a.7.700 0 0 1 .7-.7h7.600a.7.700 0 0 1 .7.700v3.400M.5 2.800h9"/><circle cx="7.800" cy="6.800" r="1.600" fill="#151b26"/></svg>
<svg style="left:1262.800px;top:153.500px" width="8" height="5" viewBox="0 0 8 5" fill="none" stroke="#151b26" stroke-width=".9"><path d="M.4.500 4 4.200 7.600.500"/></svg>
</div>
<!--UNDER-END-->
  <div id="mask"></div>
  <!--DLG-START-->
<div id="dialog" class="abs" style="left:-177px;top:-69px;width:1280px;height:720px">
<div class="abs" style="left:421.900px;top:106px;width:55px;height:15.200px;background:#1a2f61"></div>
<span class="t" style="left:422.600px;top:108.800px;font-size:10.300px;color:#0b1327">Edit content</span>
<svg style="left:0;top:0" width="1280" height="720" viewBox="0 0 1280 720" fill="none" stroke="#2e457a" stroke-width="1.500" stroke-dasharray="1.500 1.900"><path d="M415.300 672.500V99.200H1024.500"/></svg>
<div class="abs" style="left:436.300px;top:113.300px;width:586.600px;height:412.400px;background:#fff;border-radius:6px;box-shadow:0 1px 3px rgba(0,0,0,.3)"></div>
<span class="t" style="left:454.300px;top:133.200px;font-size:8.770px;color:#151b26">Action configuration</span>
<svg style="left:993.300px;top:133.500px" width="10" height="10" viewBox="0 0 10 10" stroke="#84878c" stroke-width=".9"><path d="M.4.400 9.600 9.600M9.600.400.4 9.600"/></svg>
<div class="abs" style="left:454.300px;top:158.500px;width:548.500px;height:307.400px;border:.8px solid #ebecee;border-right:0;border-radius:3px 0 0 3px"></div>
<div class="abs" style="left:999.600px;top:159.300px;width:9px;height:306px;background:#fafafa"></div>
<div class="abs" style="left:594.800px;top:159px;width:.8px;height:306.500px;background:#e8e9eb"></div>
<span class="t" style="left:466.700px;top:173.400px;font-size:8.770px;color:#151b26">Execute action</span>
<div class="abs" style="left:466.800px;top:193.200px;width:116.800px;height:23.100px;border:.8px solid #e8e9eb;border-radius:3px"></div>
<span class="t" style="left:476.200px;top:200.400px;font-size:8.770px;color:#b8babf">Search for the runn…</span>
<svg style="left:562.500px;top:199.800px" width="10" height="10" viewBox="0 0 10 10" fill="none" stroke="#151b26" stroke-width="1"><circle cx="4.600" cy="4.600" r="3.700"/><path d="M7.300 7.300 9.300 9.300"/></svg>
<div class="abs" style="left:455px;top:222.400px;width:139.800px;height:.8px;background:#e8e9eb"></div>
<div class="abs" style="left:455px;top:223.300px;width:139.800px;height:242px;overflow:hidden">
<span class="t" style="left:14.8px;top:1.8px;font-size:8.770px;color:#151b26">Component</span>
<div class="abs" style="left:23.8px;top:126.6px;width:111px;height:23.200px;background:#e6efff"></div>
<span class="t" style="left:26.4px;top:28.5px;font-size:8.770px;color:#151b26;">Component visibility</span>
<span class="t" style="left:26.4px;top:54.8px;font-size:8.770px;color:#151b26;">Component availability</span>
<span class="t" style="left:26.4px;top:81.1px;font-size:8.770px;color:#151b26;">Component data</span>
<span class="t" style="left:26.4px;top:107.4px;font-size:8.770px;color:#151b26;">Variable assignment</span>
<span class="t" style="left:26.4px;top:133.7px;font-size:8.770px;color:#151b26;">Background</span>
<span class="t" style="left:26.4px;top:160.0px;font-size:8.770px;color:#151b26;">Position adjustment</span>
<span class="t" style="left:26.4px;top:186.9px;font-size:8.770px;color:#151b26;font-family:'Noto Sans CJK SC',sans-serif;">图表请求数据</span>
<span class="t" style="left:26.4px;top:213.2px;font-size:8.770px;color:#151b26;font-family:'Noto Sans CJK SC',sans-serif;">绑定数据</span>
<span class="t" style="left:26.4px;top:239.5px;font-size:8.770px;color:#151b26;font-family:'Noto Sans CJK SC',sans-serif;">设置loading</span>
</div>
<span class="t" style="left:607.500px;top:169.700px;font-size:8.770px;color:#151b26">Action description</span>
<span class="t" style="left:607.500px;top:192.100px;font-size:8.800px;color:#5c5f66">Controls the background properties of the selected component</span>
<div class="abs" style="left:691px;top:242px;width:32.200px;height:14.600px;border-radius:7.300px;background:#d4d6d9"></div>
<div class="abs" style="left:692.400px;top:243.400px;width:11.800px;height:11.800px;border-radius:50%;background:#fff"></div>
<div class="abs" style="left:607.500px;top:291.300px;width:374.300px;height:163.900px;border:.8px solid #e8e9eb;border-radius:4px"></div>
<div class="abs" style="left:615.800px;top:325px;width:358px;height:92px;border:.8px solid #e8e9eb;border-radius:4px"></div>
<div class="abs" style="left:700.500px;top:351px;width:265px;height:23.500px;border:.8px solid #e8e9eb;border-radius:3px"></div>
<div class="abs" style="left:708.700px;top:356px;width:14.200px;height:14.200px;background:#be2525;border-radius:2px"></div>
<span class="t" style="left:727.800px;top:358.400px;font-size:8.900px;color:#151b26">#be2525</span>
<svg style="left:935.700px;top:359.400px" width="7.400" height="7.400" viewBox="0 0 8 8"><circle cx="4" cy="4" r="3.800" fill="#c4c6cc"/><path d="M2.500 2.500 5.500 5.500M5.500 2.500 2.500 5.500" stroke="#fff" stroke-width=".9"/></svg>
<svg style="left:947.800px;top:360.400px" width="8" height="5" viewBox="0 0 8 5" fill="none" stroke="#5c5f66" stroke-width=".9"><path d="M.4 4.400 4 .7 7.600 4.400"/></svg>
<div class="abs" style="left:700.500px;top:386px;width:265px;height:23.500px;border:.8px solid #e8e9eb;border-radius:3px"></div>
<div class="abs" style="left:703px;top:389px;width:79.500px;height:17.500px;background:#f2f3f5;border-radius:2px"></div>
<span class="t" style="left:709.600px;top:393.300px;font-size:8.800px;color:#151b26">&lt;Text&gt;Text(tpl)</span>
<svg style="left:771.500px;top:394.300px" width="7" height="7" viewBox="0 0 7 7" stroke="#5c5f66" stroke-width=".8"><path d="M.4.400 6.600 6.600M6.600.400.4 6.600"/></svg>
<svg style="left:949.500px;top:395.500px" width="8" height="5" viewBox="0 0 8 5" fill="none" stroke="#b8babf" stroke-width=".9"><path d="M.4.600 4 4.300 7.600.600"/></svg>
<div class="abs" style="left:615.800px;top:425px;width:357.500px;height:22.800px;border:.9px dashed #dfe0e3;border-radius:3px"></div>
<span class="t" style="left:776.800px;top:431.600px;font-size:8.800px;color:#151b26;font-family:'Noto Sans CJK SC',sans-serif">新增目标</span>
<div class="abs" style="left:1001.700px;top:173px;width:5.400px;height:278.500px;background:#8e8e8e;border-radius:2.700px"></div>
<div class="abs" style="left:1001.300px;top:163.700px;width:0;height:0;border-left:3px solid transparent;border-right:3px solid transparent;border-bottom:3.300px solid #505050"></div>
<div class="abs" style="left:1001.400px;top:457.600px;width:0;height:0;border-left:3px solid transparent;border-right:3px solid transparent;border-top:3.200px solid #505050"></div>
<div class="abs" style="left:893px;top:484.700px;width:52.700px;height:22.900px;border:.8px solid #e8e9eb;border-radius:3px;background:#fff"></div>
<span class="t" style="left:905.800px;top:491.300px;font-size:8.770px;color:#151b26">Cancel</span>
<div class="abs" style="left:951.200px;top:484.700px;width:53.500px;height:22.900px;border-radius:3px;background:#2468f2"></div>
<span class="t" style="left:962.700px;top:491.300px;font-size:8.700px;color:#fff;-webkit-text-stroke:.25px #fff">Confirm</span>
<div class="abs" style="left:523px;top:210.800px;width:176.300px;height:307.400px;background:#fff;border-radius:3.500px;box-shadow:0 2px 9px rgba(0,0,0,.2),0 0 1px rgba(0,0,0,.15)"></div>
<div class="abs" style="left:523px;top:243.900px;width:176.300px;height:.8px;background:#e8e9eb"></div>
<div class="abs" style="left:533px;top:222.100px;width:11.700px;height:11.700px;border-radius:50%;background:#d6e4ff;border:1px solid #5a8cf8"></div>
<div class="abs" style="left:554px;top:222.600px;width:11px;height:11px;border-radius:50%;background:linear-gradient(#e6e6e6,#c2c2c2)"></div>
<div class="abs" style="left:574.600px;top:222.600px;width:11px;height:11px;border-radius:50%;background:#d4d4d4;overflow:hidden"><svg style="left:0;top:0" width="11" height="11" viewBox="0 0 11 11"><path d="M0 8 3 5l2.500 2L8 5l3 3v3H0z" fill="#c0c0c0"/><circle cx="7.200" cy="3.400" r="1.100" fill="#f0f0f0"/></svg></div>
<span class="t" style="left:533.500px;top:255.100px;font-size:8.750px;color:#2468f2">Custom Colors</span>
<div class="abs" style="left:533.500px;top:275.100px;width:155.500px;height:.8px;background:#e8e9eb"></div>
<div class="abs" style="left:532px;top:284.600px;width:159px;height:118.600px;background:linear-gradient(to top,#000,rgba(0,0,0,0)),linear-gradient(to right,#fff,rgba(255,255,255,0)),#f00"></div>
<div class="abs" style="left:656.200px;top:311.600px;width:6.400px;height:6.400px;border-radius:50%;border:1.300px solid #fff;box-shadow:0 0 0 .6px rgba(0,0,0,.45),inset 0 0 0 .6px rgba(0,0,0,.45)"></div>
<div class="abs" style="left:532px;top:406.500px;width:138px;height:6.800px;background:linear-gradient(to right,#f00 0%,#ff0 17%,#0f0 33%,#0ff 50%,#00f 67%,#f0f 83%,#f00 100%)"></div>
<div class="abs" style="left:532px;top:406.900px;width:2.200px;height:6px;background:#fff;border-radius:.8px;box-shadow:0 0 1.500px rgba(0,0,0,.6)"></div>
<div class="abs" style="left:532px;top:416.800px;width:138px;height:6.800px;background:linear-gradient(to right,rgba(190,37,37,0),#be2525),repeating-conic-gradient(#ececec 0 25%,#fff 0 50%) 0 0/6.800px 6.800px"></div>
<div class="abs" style="left:667.200px;top:417.200px;width:2.200px;height:6px;background:#fff;border-radius:.8px;box-shadow:0 0 1.500px rgba(0,0,0,.6)"></div>
<div class="abs" style="left:672.800px;top:406.100px;width:18.200px;height:17.900px;background:#be2525;border-radius:2px"></div>
<div class="abs" style="left:532px;top:431.200px;width:47.3px;height:14.700px;border:.8px solid #d9dadd"></div>
<span class="t" style="left:536.4px;top:434.300px;font-size:8.150px;color:#222">BE2525</span>
<span class="t" style="left:532px;top:449.500px;width:47.3px;text-align:center;font-size:8.200px;color:#333">Hex</span>
<div class="abs" style="left:583px;top:431.200px;width:23.7px;height:14.700px;border:.8px solid #d9dadd"></div>
<span class="t" style="left:587.4px;top:434.300px;font-size:8.150px;color:#222">190</span>
<span class="t" style="left:583px;top:449.500px;width:23.7px;text-align:center;font-size:8.200px;color:#333">R</span>
<div class="abs" style="left:611.2px;top:431.200px;width:23.5px;height:14.700px;border:.8px solid #d9dadd"></div>
<span class="t" style="left:615.6px;top:434.300px;font-size:8.150px;color:#222">37</span>
<span class="t" style="left:611.2px;top:449.500px;width:23.5px;text-align:center;font-size:8.200px;color:#333">G</span>
<div class="abs" style="left:639px;top:431.200px;width:23.7px;height:14.700px;border:.8px solid #d9dadd"></div>
<span class="t" style="left:643.4px;top:434.300px;font-size:8.150px;color:#222">37</span>
<span class="t" style="left:639px;top:449.500px;width:23.7px;text-align:center;font-size:8.200px;color:#333">B</span>
<div class="abs" style="left:667px;top:431.200px;width:23.9px;height:14.700px;border:.8px solid #d9dadd"></div>
<span class="t" style="left:671.4px;top:434.300px;font-size:8.150px;color:#222">100</span>
<span class="t" style="left:667px;top:449.500px;width:23.9px;text-align:center;font-size:8.200px;color:#333">A</span>
<div class="abs" style="left:532.200px;top:470px;width:158.700px;height:.8px;background:#e8e9eb"></div>
<span class="t" style="left:532.600px;top:480.400px;font-size:8.720px;color:#5c5f66">Common Colors</span>
<span class="t" style="left:676.600px;top:480.400px;font-size:8.720px;color:#5c5f66">edit</span>
<div class="abs" style="left:532.500px;top:495px;width:13.600px;height:13.600px;background:#be2525;border-radius:1.500px"></div>
<div class="abs" style="left:553.200px;top:495px;width:13.600px;height:13.600px;background:#4d8bff;border-radius:1.500px"></div>
<svg style="left:870px;top:495px" width="120" height="80" viewBox="870 495 120 80"><path d="M879.500 564.700 961.800 505.600 958.400 503.600 972.600 503.300 966.300 514.300 965.600 510.400 880.600 565.900Z" fill="#ff1f17"/></svg>
</div>
<!--DLG-END-->
</div>

<!-- STATUS BAR -->
<div id="status" class="abs" style="left:0;top:673px;width:1280px;height:20px;background:#f0f0f0">
  <div class="abs" style="left:0;top:0;width:1280px;height:4.800px;background:#fcfcfc"></div>
  <div class="abs" style="left:0;top:4.800px;width:1280px;height:1px;background:#a9a9a9"></div>
  <span class="t" style="left:-1.600px;top:9.300px;font-size:8.900px;color:#111">Default Profile</span>
</div>

<!-- TASKBAR -->
<div id="taskbar" class="abs" style="left:0;top:693.300px;width:1280px;height:26.700px;background:#101010;overflow:hidden">
  <div class="abs" style="left:262px;top:0;width:1018px;height:27px;background:radial-gradient(ellipse 260px 22px at 400px 16px,#1f1916 0,transparent 100%),radial-gradient(ellipse 200px 20px at 760px 10px,#1c1815 0,transparent 100%),linear-gradient(90deg,#0d0c0c 0,#141110 25%,#181412 60%,#171413 100%)"></div>
  <div class="abs" style="left:0;top:0;width:34px;height:27px;background:#161616"></div>
  <svg style="left:11.500px;top:8px" width="12" height="12" viewBox="0 0 12 12" fill="#fff"><path d="M0 1.700 4.900 1v4.700H0zM5.500.9 12 0v5.700H5.500zM0 6.300h4.900V11L0 10.300zM5.500 6.300H12V12l-6.500-.9z"/></svg>
  <div class="abs" style="left:34px;top:0;width:228.500px;height:27px;background:#f2f2f2"></div>
  <svg style="left:42px;top:7.500px" width="11" height="11" viewBox="0 0 11 11" fill="none" stroke="#222" stroke-width="1"><circle cx="6.600" cy="4.400" r="3.400"/><path d="M4.200 6.800.8 10.200"/></svg>
  <span class="t" style="left:60.500px;top:8.600px;font-size:9.650px;color:#333">Type here to search</span>
  <!-- task view -->
  <svg style="left:273.500px;top:8.500px" width="12" height="10" viewBox="0 0 12 10" fill="none" stroke="#fff" stroke-width=".9"><rect x="1.600" y="2" width="6.400" height="6"/><path d="M1.600.5H8M1.600 9.500H8M10 2v6M11.600.6v1M11.600 8.400v1"/></svg>
  <!-- file explorer -->
  <svg style="left:305px;top:6.500px" width="17" height="14" viewBox="0 0 17 14"><path d="M.5 12.500V1h5l1.200 1.600h9.800v9.900z" fill="#f6c544"/><path d="M.5 12.500V5h16v7.500z" fill="#fbd969"/><path d="M4.500 13.500v-4h8v4h-2v-2h-4v2z" fill="#3f8fe0"/></svg>
  <div class="abs" style="left:300px;top:25.400px;width:26.500px;height:1.600px;background:#8fc3f5"></div>
  <!-- X app (active) -->
  <div class="abs" style="left:330px;top:0;width:32px;height:27px;background:#3b3a39"></div>
  <svg style="left:336px;top:3.500px" width="20" height="20" viewBox="0 0 18 18">
    <path d="M9.500 3.500H14.300L8.300 15H3.300Z" fill="none" stroke="#3a5fd0" stroke-width="1"/>
    <path d="M2.800 3.100H6.200L8.900 8.100 7.300 9.300Z" fill="#2f62f5"/>
    <path d="M8.200 10.300 9.600 9.600 14.100 15.300H10.800Z" fill="#19c9a4"/>
  </svg>
  <div class="abs" style="left:330px;top:25.400px;width:32px;height:1.600px;background:#8fc3f5"></div>
  <!-- edge -->
  <svg style="left:370px;top:5px" width="17" height="17" viewBox="0 0 17 17"><defs><linearGradient id="eg" x1="0" y1="0" x2="1" y2="1"><stop offset="0" stop-color="#35c1f1"/><stop offset=".5" stop-color="#1b8ad8"/><stop offset="1" stop-color="#0c5aa6"/></linearGradient></defs><circle cx="8.500" cy="8.500" r="8" fill="url(#eg)"/><path d="M1 9.500C1.500 5 5 3.500 8.500 3.500c4 0 6.500 2.500 6.500 5 0 1.800-1.500 2.800-3 2.800-1.400 0-2.200-.6-2.200-1.300 0-.5.500-.8.500-1.700 0-1.200-1.200-2-2.600-2C5 6.300 3.500 8.500 3.500 10.500c0 3 2.500 5.300 5.500 5.800C4.500 16.800 1 13.500 1 9.500z" fill="#7ee06a" opacity=".85"/><path d="M6 8.500c.3-1 1-1.600 2-1.600 1.300 0 2 .8 2 1.700 0 .7-.4 1-.4 1.500 0 .9 1.200 1.500 2.600 1.300-1 2-3 2.800-4.600 2.200C6 13 5.400 10.500 6 8.500z" fill="#fff" opacity=".9"/></svg>
  <div class="abs" style="left:366px;top:25.400px;width:26.500px;height:1.600px;background:#8fc3f5"></div>
  <!-- tray -->
  <svg style="left:1159.500px;top:10.300px" width="8" height="6" viewBox="0 0 8 6" fill="none" stroke="#fff" stroke-width="1"><path d="M.5 5 4 1.200 7.500 5"/></svg>
  <svg style="left:1174px;top:7.800px" width="12" height="11" viewBox="0 0 12 11" fill="none" stroke="#fff" stroke-width=".9"><path d="M.6 3.800h2L5 1.400v8.200L2.600 7.200h-2z"/><path d="M6.600 3.800c.8.800.8 2.600 0 3.400M8.200 2.400c1.600 1.600 1.600 4.600 0 6.200M9.800 1.200c2.200 2.400 2.200 6.200 0 8.600"/></svg>
  <svg style="left:1190.300px;top:7.800px" width="12" height="11" viewBox="0 0 12 11" fill="none" stroke="#fff" stroke-width=".9"><rect x="2.600" y="1.400" width="8.800" height="5.800"/><path d="M5 9.600h4M7 7.200v2.400M.6.600v6.800M.6 3h2"/></svg>
  <span class="t" style="left:1208.800px;top:3.600px;font-size:8px;color:#fff;letter-spacing:-.1px">10:16 AM</span>
  <span class="t" style="left:1205.800px;top:15.500px;font-size:8px;color:#fff;letter-spacing:-.1px">10/10/2025</span>
  <svg style="left:1254px;top:7.800px" width="13" height="13" viewBox="0 0 13 13" fill="none" stroke="#fff" stroke-width=".9"><path d="M.6.6h11v8.400H6l-2.400 2.400V9H.6z"/><circle cx="10.400" cy="10" r="1.600" fill="#1d1b19"/><text x="9.300" y="11.800" font-size="4" fill="#fff" stroke="none" font-family="Liberation Sans,sans-serif">2</text></svg>
</div>

</div>
</body>
</html>
